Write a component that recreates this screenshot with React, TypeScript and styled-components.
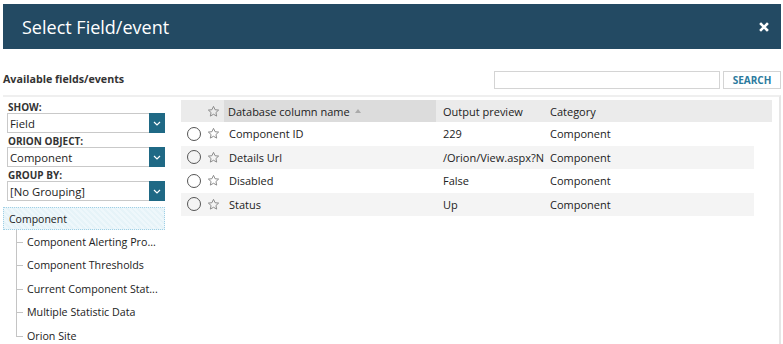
import styled, { createGlobalStyle } from 'styled-components'

const GlobalStyle = createGlobalStyle`
  html, body {
    margin: 0;
    padding: 0;
    background: #fff;
  }
  body {
    font-family: 'Open Sans', 'Noto Sans', sans-serif;
    color: #333;
  }
`

const Dialog = styled.div`
  width: 783px;
  height: 344px;
  padding: 4px 2px 0 3px;
  box-sizing: border-box;
  overflow: hidden;
`

const Header = styled.header`
  height: 45px;
  background: #234a63;
  display: flex;
  align-items: center;
  justify-content: space-between;
  padding: 0 12px 0 19px;
  color: #fff;
  h1 {
    margin: 0;
    font-size: 18px;
    font-weight: 400;
  }
`

const CloseBtn = styled.button`
  border: 0;
  background: none;
  padding: 0;
  width: 10px;
  height: 10px;
  display: flex;
`

const Toolbar = styled.div`
  display: flex;
  align-items: center;
  justify-content: space-between;
  height: 46px;
  box-sizing: border-box;
  h2 {
    margin: 14px 0 0;
    font-size: 10.7px;
    font-weight: 700;
    color: #333;
  }
`

const SearchBox = styled.div`
  display: flex;
  gap: 3px;
  margin-top: 16px;
  input {
    width: 226px;
    height: 18px;
    border: 1px solid #d4d4d4;
    box-sizing: border-box;
    padding: 0 4px;
  }
  button {
    width: 58px;
    height: 18px;
    box-sizing: border-box;
    border: 1px solid #d4d4d4;
    background: #fff;
    color: #2c7a9e;
    font-family: inherit;
    font-size: 10px;
    font-weight: 700;
    padding: 0;
  }
`

const Panel = styled.section`
  border-top: 2px solid #efefef;
  border-right: 2px solid #e6e6e6;
  display: grid;
  grid-template-columns: 162px 1fr;
  column-gap: 16px;
  height: 260px;
  box-sizing: border-box;
`

const Sidebar = styled.div`
  display: flex;
  flex-direction: column;
  padding-top: 2px;
`

const Label = styled.label`
  font-size: 10px;
  font-weight: 700;
  color: #333;
  padding-left: 5px;
  height: 12px;
  line-height: 12px;
  margin-top: 2px;
`

const Select = styled.div`
  margin-left: 4px;
  height: 20px;
  border: 1px solid #c9c9c9;
  box-sizing: border-box;
  display: flex;
  align-items: center;
  font-size: 11.3px;
  color: #222;
  span {
    flex: 1;
    padding-left: 2px;
  }
`

const Caret = styled.div`
  width: 16px;
  height: 20px;
  margin: -1px -1px -1px 0;
  background: #1f6985;
  display: flex;
  align-items: center;
  justify-content: center;
`

const TreeRoot = styled.div`
  margin-top: 6px;
  height: 23px;
  box-sizing: border-box;
  border: 1px dotted #9fd0e6;
  background: repeating-linear-gradient(45deg, #e6f3f8 0 2px, #eef7fb 2px 4px);
  font-size: 10.5px;
  padding-left: 5px;
  display: flex;
  align-items: center;
  color: #222;
`

const TreeItem = styled.div<{ $last?: boolean }>`
  position: relative;
  height: 23.5px;
  display: flex;
  align-items: center;
  padding-left: 24px;
  font-size: 10.7px;
  color: #222;
  white-space: nowrap;
  &::before {
    content: '';
    position: absolute;
    left: 13px;
    top: 0;
    height: ${(p) => (p.$last ? '50%' : '100%')};
    border-left: 1px solid #c4c4c4;
  }
  &::after {
    content: '';
    position: absolute;
    left: 13px;
    top: 50%;
    width: 7px;
    border-top: 1px solid #c4c4c4;
  }
`

const Table = styled.div`
  padding-top: 3px;
  padding-right: 7px;
`

const Row = styled.div<{ $head?: boolean; $shade?: boolean }>`
  display: grid;
  grid-template-columns: 21px 22px 212px 108px 1fr;
  height: ${(p) => (p.$head ? '22px' : '23.5px')};
  align-items: center;
  font-size: 11px;
  color: #222;
  background: ${(p) => (p.$head ? '#ebebeb' : p.$shade ? '#f4f4f4' : '#fff')};
  margin-right: ${(p) => (p.$head ? '0' : '18px')};
`

const Cell = styled.div<{ $sorted?: boolean; $center?: boolean; $pad?: number }>`
  height: 100%;
  display: flex;
  align-items: center;
  justify-content: ${(p) => (p.$center ? 'center' : 'flex-start')};
  padding-left: ${(p) => (p.$center ? 0 : p.$pad ?? 4)}px;
  background: ${(p) => (p.$sorted ? '#dcdcdc' : 'transparent')};
  white-space: nowrap;
  overflow: hidden;
`

const Radio = styled.span`
  width: 12px;
  height: 12px;
  border: 1px solid #555;
  border-radius: 50%;
  margin-left: 4px;
`

const SortArrow = styled.span`
  margin-left: 5px;
  width: 0;
  height: 0;
  border-left: 3.5px solid transparent;
  border-right: 3.5px solid transparent;
  border-bottom: 4px solid #aaa;
`

const Star = () => (
  <svg width="13" height="13" viewBox="0 0 24 24" fill="none" stroke="#8a8a8a" strokeWidth="1.8" strokeLinejoin="round">
    <path d="M12 2.5l2.9 6.2 6.6.7-5 4.5 1.4 6.6L12 17.1l-5.9 3.4 1.4-6.6-5-4.5 6.6-.7z" />
  </svg>
)

const Chevron = () => (
  <svg width="8" height="5" viewBox="0 0 8 5" fill="none" stroke="#fff" strokeWidth="1.2">
    <path d="M1 1l3 3 3-3" />
  </svg>
)

const selects = [
  { label: 'SHOW:', value: 'Field' },
  { label: 'ORION OBJECT:', value: 'Component' },
  { label: 'GROUP BY:', value: '[No Grouping]' },
]

const children = [
  'Component Alerting Pro...',
  'Component Thresholds',
  'Current Component Stat...',
  'Multiple Statistic Data',
  'Orion Site',
]

const rows = [
  { name: 'Component ID', preview: '229', category: 'Component' },
  { name: 'Details Url', preview: '/Orion/View.aspx?NetObject', category: 'Component' },
  { name: 'Disabled', preview: 'False', category: 'Component' },
  { name: 'Status', preview: 'Up', category: 'Component' },
]

const App = () => {
  return (
    <Dialog>
      <GlobalStyle />
      <Header>
        <h1>Select Field/event</h1>
        <CloseBtn aria-label="close">
          <svg width="10" height="10" viewBox="0 0 10 10" stroke="#fff" strokeWidth="2.6" strokeLinecap="square">
            <path d="M2 2l6 6M8 2l-6 6" />
          </svg>
        </CloseBtn>
      </Header>
      <Toolbar>
        <h2>Available fields/events</h2>
        <SearchBox>
          <input type="text" />
          <button>SEARCH</button>
        </SearchBox>
      </Toolbar>
      <Panel>
        <Sidebar>
          {selects.map((s) => (
            <div key={s.label} style={{ display: 'contents' }}>
              <Label>{s.label}</Label>
              <Select>
                <span>{s.value}</span>
                <Caret>
                  <Chevron />
                </Caret>
              </Select>
            </div>
          ))}
          <TreeRoot>Component</TreeRoot>
          {children.map((c, i) => (
            <TreeItem key={c} $last={i === children.length - 1}>
              {c}
            </TreeItem>
          ))}
        </Sidebar>
        <Table>
          <Row $head>
            <Cell />
            <Cell $center>
              <Star />
            </Cell>
            <Cell $sorted>
              Database column name
              <SortArrow />
            </Cell>
            <Cell $pad={7}>Output preview</Cell>
            <Cell $pad={6}>Category</Cell>
          </Row>
          {rows.map((r, i) => (
            <Row key={r.name} $shade={i % 2 === 1}>
              <Cell $center>
                <Radio />
              </Cell>
              <Cell $center>
                <Star />
              </Cell>
              <Cell $pad={5}>{r.name}</Cell>
              <Cell $pad={7}>{r.preview}</Cell>
              <Cell $pad={6}>{r.category}</Cell>
            </Row>
          ))}
        </Table>
      </Panel>
    </Dialog>
  )
}

export default App
